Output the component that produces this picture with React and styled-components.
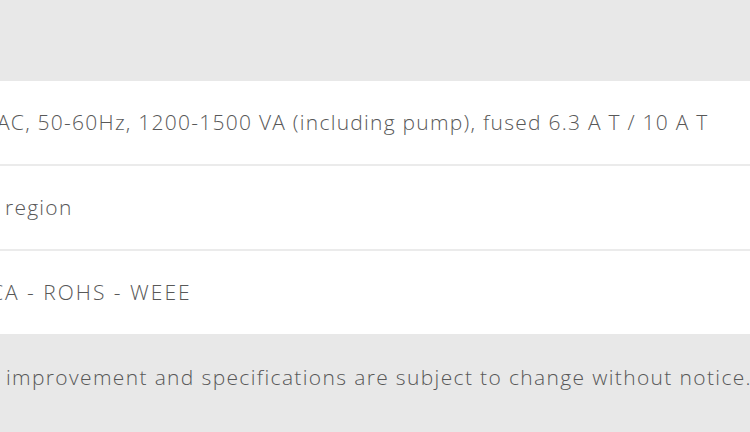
import React from 'react';
import styled, { createGlobalStyle } from 'styled-components';

const GlobalStyle = createGlobalStyle`
  html, body {
    margin: 0;
    padding: 0;
    background: #e8e8e8;
    overflow: hidden;
  }
  body {
    font-family: "Open Sans", "Liberation Sans", sans-serif;
  }
`;

const rows = [
  { text: 'AC, 50-60Hz, 1200-1500 VA (including pump), fused 6.3 A T / 10 A T', indent: -3 },
  { text: 'region', indent: 5 },
  { text: 'CA - ROHS - WEEE', indent: -10, spacing: 2 },
];

const App = () => {
  return (
    <Page>
      <GlobalStyle />
      <Table>
        {rows.map((row, i) => (
          <Row key={i}>
            <Value $spacing={row.spacing} style={{ textIndent: row.indent }}>
              {row.text}
            </Value>
          </Row>
        ))}
      </Table>
      <Note>improvement and specifications are subject to change without notice.</Note>
    </Page>
  );
};

export default App;

const Page = styled.div`
  width: 750px;
  height: 432px;
  display: flex;
  flex-direction: column;
  padding-top: 81px;
  box-sizing: border-box;
  background: #e8e8e8;
  color: #585858;
`;

const Table = styled.div`
  display: flex;
  flex-direction: column;
  background: #ffffff;
`;

const Row = styled.div`
  height: 85px;
  display: flex;
  align-items: center;
  padding-bottom: 2px;
  box-sizing: border-box;
  border-bottom: 2px solid #ebebeb;
  &:last-child {
    height: 83px;
    border-bottom: none;
  }
`;

const Value = styled.div`
  font-size: 21px;
  font-weight: 300;
  white-space: nowrap;
  letter-spacing: ${(p) => p.$spacing ?? 1.25}px;
`;

const Note = styled.div`
  height: 88px;
  display: flex;
  align-items: center;
  padding-left: 6px;
  padding-bottom: 2px;
  box-sizing: border-box;
  font-size: 21px;
  font-weight: 300;
  white-space: nowrap;
  letter-spacing: 1.35px;
`;
